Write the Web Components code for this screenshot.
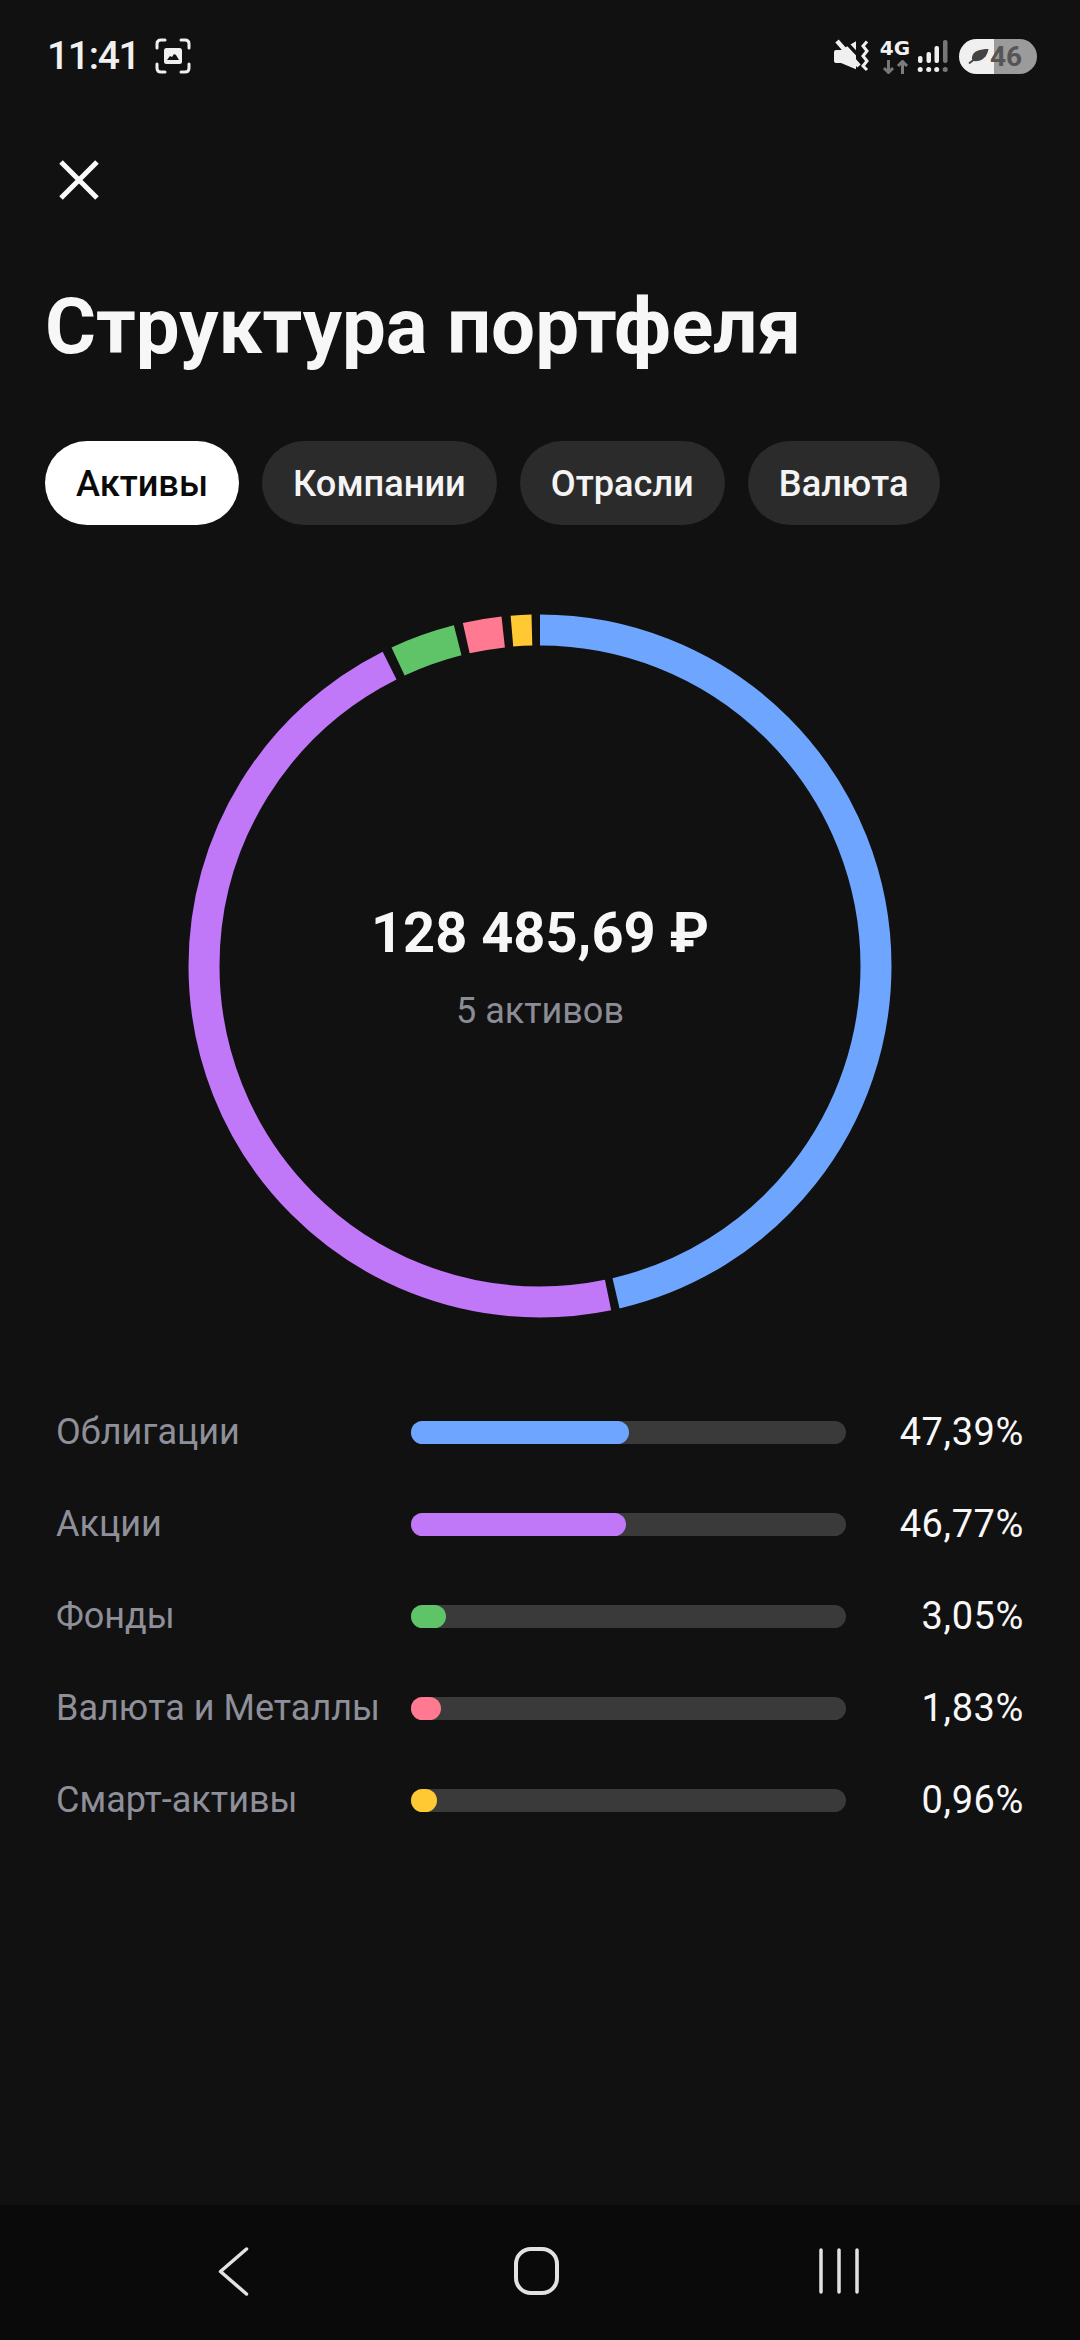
<!DOCTYPE html>
<html lang="ru">
<head>
<meta charset="utf-8">
<title>Структура портфеля</title>
<style>
  html, body { margin: 0; padding: 0; background: #111112; }
  body { width: 1080px; height: 2340px; overflow: hidden; font-family: Roboto, "Liberation Sans", sans-serif; }
</style>
</head>
<body>
<app-screen>
  <status-bar></status-bar>
  <close-button></close-button>
  <page-title>Структура портфеля</page-title>
  <pill-tabs>
    <pill-tab active>Активы</pill-tab>
    <pill-tab>Компании</pill-tab>
    <pill-tab>Отрасли</pill-tab>
    <pill-tab>Валюта</pill-tab>
  </pill-tabs>
  <donut-chart amount="128 485,69 ₽" note="5 активов"></donut-chart>
  <asset-list>
    <asset-row label="Облигации" value="47,39%" color="#6ea6ff" fill="218"></asset-row>
    <asset-row label="Акции" value="46,77%" color="#c077f8" fill="215"></asset-row>
    <asset-row label="Фонды" value="3,05%" color="#5fc468" fill="35"></asset-row>
    <asset-row label="Валюта и Металлы" value="1,83%" color="#ff7a90" fill="30"></asset-row>
    <asset-row label="Смарт-активы" value="0,96%" color="#ffc933" fill="26"></asset-row>
  </asset-list>
  <nav-bar></nav-bar>
</app-screen>

<script>
  // small helper so every element gets an open shadow root from a template
  function makeElement(name, html, setup) {
    const tpl = document.createElement('template');
    tpl.innerHTML = html;
    customElements.define(name, class extends HTMLElement {
      connectedCallback() {
        if (this.shadowRoot) return;
        const root = this.attachShadow({ mode: 'open' });
        root.appendChild(tpl.content.cloneNode(true));
        if (setup) setup(root, this);
      }
    });
  }

  makeElement('app-screen', `
    <style>
      :host { display: flex; flex-direction: column; width: 1080px; height: 2340px; background: #111112; color: #f7f7f8; }
    </style>
    <slot></slot>
  `);

  makeElement('status-bar', `
    <style>
      :host { display: flex; align-items: center; height: 112px; padding: 0 43px 0 47px; }
      .time { font-size: 39px; font-weight: 500; letter-spacing: -1.3px; color: #f0f0f0; width: 108px; }
      .right { margin-left: auto; display: flex; align-items: center; }
      svg { display: block; }
      .battery {
        display: flex; align-items: center; width: 78px; height: 35px; margin-left: 6px; border-radius: 18px;
        background: linear-gradient(90deg, #f0f0f0 0 35px, #9b9b9b 35px);
        box-sizing: border-box; padding-left: 9px; gap: 1px;
        font: 700 28px Roboto, sans-serif; color: #555;
      }
      .g4 { width: 36px; height: 36px; margin-left: 6px; }
      .g4 span { display: block; font: 700 20px/20px "DejaVu Sans", sans-serif; color: #f0f0f0; text-align: center; }
    </style>
    <span class="time">11:41</span>
    <svg width="36" height="36" viewBox="0 0 36 36" fill="none">
      <path d="M2 10V6q0-4 4-4h4M26 2h4q4 0 4 4v4M34 26v4q0 4-4 4h-4M10 34H6q-4 0-4-4v-4" stroke="#f0f0f0" stroke-width="3" stroke-linecap="round"/>
      <rect x="9" y="10" width="18" height="16" rx="2.5" fill="#f0f0f0"/>
      <path d="M12 22l3-4 2 1 2-3 2 1 3 5z" fill="#111112"/>
    </svg>
    <div class="right">
      <svg width="41" height="36" viewBox="0 0 41 36">
        <path d="M4 14q0-2 2-2h5L26 3.300v28L11 25H6q-2 0-2-2z" fill="#f0f0f0"/>
        <path d="M12 0l17 18" stroke="#111112" stroke-width="3.500"/>
        <path d="M7 3l22 25" stroke="#f0f0f0" stroke-width="4.500"/>
        <path d="M37 3.500l-4 4.500 4 5-4 5 4 5-4 5 4 4" fill="none" stroke="#f0f0f0" stroke-width="3"/>
      </svg>
      <div class="g4">
        <span>4G</span>
        <svg width="36" height="14" viewBox="0 0 36 14" style="margin-top:2px">
          <path d="M11.500 0v12M7 8l4.500 4.500L16 8" fill="none" stroke="#777" stroke-width="3"/>
          <path d="M25.500 14V2M21 6l4.500-4.500L30 6" fill="none" stroke="#7d7d7d" stroke-width="3"/>
        </svg>
      </div>
      <svg width="36" height="36" viewBox="0 0 36 36" style="margin-left:4px">
        <rect x="1" y="18" width="4.500" height="7" rx="2" fill="#f0f0f0"/>
        <rect x="9.500" y="14" width="4.500" height="11" rx="2" fill="#f0f0f0"/>
        <rect x="17.500" y="8" width="4.500" height="17" rx="2" fill="#f0f0f0"/>
        <rect x="26" y="2" width="4.500" height="23" rx="2" fill="#777"/>
        <circle cx="3.200" cy="31.500" r="2.500" fill="#f0f0f0"/>
        <circle cx="11.700" cy="31.500" r="2.500" fill="#f0f0f0"/>
        <circle cx="19.700" cy="31.500" r="2.500" fill="#f0f0f0"/>
        <circle cx="28.200" cy="31.500" r="2.500" fill="#777"/>
      </svg>
      <div class="battery">
        <svg width="21" height="16" viewBox="0 0 21 16">
          <path d="M20.500 1C12 1 5 3 4 9c-.3 2 .3 3 1 4 8 1 14-3 15.500-12z" fill="#444"/>
          <path d="M1 15.500L13 6" fill="none" stroke="#444" stroke-width="1.800"/>
        </svg>
        <span>46</span>
      </div>
    </div>
  `);

  makeElement('close-button', `
    <style>
      :host { display: block; width: 40px; height: 40px; margin: 48px 0 0 59px; }
      svg { display: block; }
    </style>
    <svg width="40" height="40" viewBox="0 0 40 40">
      <path d="M2 2l36 36M38 2L2 38" stroke="#fafafa" stroke-width="5"/>
    </svg>
  `);

  makeElement('page-title', `
    <style>
      :host { display: block; margin: 77px 0 0 45px; font-size: 78px; line-height: 100px; font-weight: 700; color: #f7f7f8; white-space: nowrap; }
    </style>
    <slot></slot>
  `);

  makeElement('pill-tabs', `
    <style>
      :host { display: flex; gap: 23px; margin: 64px 0 0 45px; }
    </style>
    <slot></slot>
  `);

  makeElement('pill-tab', `
    <style>
      :host {
        display: flex; align-items: center; height: 84px; padding: 0 31px; border-radius: 42px;
        background: #2b2b2c; color: #f4f4f5; font-size: 36.2px; font-weight: 500; white-space: nowrap;
      }
      :host([active]) { background: #fff; color: #0a0a0a; }
    </style>
    <slot></slot>
  `);

  // segments in degrees clockwise from 12 o'clock, measured off the reference
  const segments = [
    ['#6ea6ff', 0, 166.9],
    ['#c077f8', 168.3, 165.1],
    ['#5fc468', 335, 10.8],
    ['#ff7a90', 347.3, 6.4],
    ['#ffc933', 355.2, 3.4]
  ];

  makeElement('donut-chart', `
    <style>
      :host { display: grid; width: 704px; height: 704px; margin: 89px auto 0; place-items: center; }
      svg, .center { grid-area: 1 / 1; }
      svg { display: block; transform: rotate(-90deg); }
      .center { text-align: center; }
      .amount { font-size: 56px; line-height: 66px; font-weight: 700; color: #f7f7f8; white-space: nowrap; }
      .note { font-size: 36px; line-height: 42px; margin-top: 24px; color: #8b8c96; }
    </style>
    <svg width="704" height="704" viewBox="0 0 704 704"></svg>
    <div class="center">
      <div class="amount"></div>
      <div class="note"></div>
    </div>
  `, (root, el) => {
    const svg = root.querySelector('svg');
    svg.innerHTML = segments.map(([color, start, len]) =>
      `<circle cx="352" cy="352" r="336" fill="none" stroke="${color}" stroke-width="31" pathLength="360" stroke-dasharray="${len} 360" stroke-dashoffset="${-start}"/>`
    ).join('');
    root.querySelector('.amount').textContent = el.getAttribute('amount');
    root.querySelector('.note').textContent = el.getAttribute('note');
  });

  makeElement('asset-list', `
    <style>
      :host { display: flex; flex-direction: column; margin: 68px 0 0 56px; width: 968px; }
    </style>
    <slot></slot>
  `);

  makeElement('asset-row', `
    <style>
      :host { display: flex; align-items: center; height: 92px; font-size: 36px; }
      .label { width: 355px; color: #8e8f99; white-space: nowrap; }
      .track { width: 435px; height: 23px; border-radius: 12px; background: #3a3a3a; }
      .fill { height: 100%; border-radius: 12px; }
      .value { margin-left: auto; color: #f7f7f8; font-size: 38px; letter-spacing: .6px; }
    </style>
    <span class="label"></span>
    <div class="track"><div class="fill"></div></div>
    <span class="value"></span>
  `, (root, el) => {
    root.querySelector('.label').textContent = el.getAttribute('label');
    root.querySelector('.value').textContent = el.getAttribute('value');
    const fill = root.querySelector('.fill');
    fill.style.width = el.getAttribute('fill') + 'px';
    fill.style.background = el.getAttribute('color');
  });

  makeElement('nav-bar', `
    <style>
      :host { display: block; margin-top: auto; height: 135px; background: #0a0a0a; }
      svg { display: block; margin-top: 41px; }
    </style>
    <svg width="1080" height="54" viewBox="0 0 1080 54" fill="none" stroke="#e2e2e2" stroke-linecap="round" stroke-linejoin="round">
      <path d="M246.500 3L220.500 25.500L246.500 48" stroke-width="3.500"/>
      <rect x="516" y="3" width="41" height="44" rx="15" stroke-width="4"/>
      <path d="M821 4v42M839 4v42M857 4v42" stroke-width="3.500"/>
    </svg>
  `);
</script>
</body>
</html>
